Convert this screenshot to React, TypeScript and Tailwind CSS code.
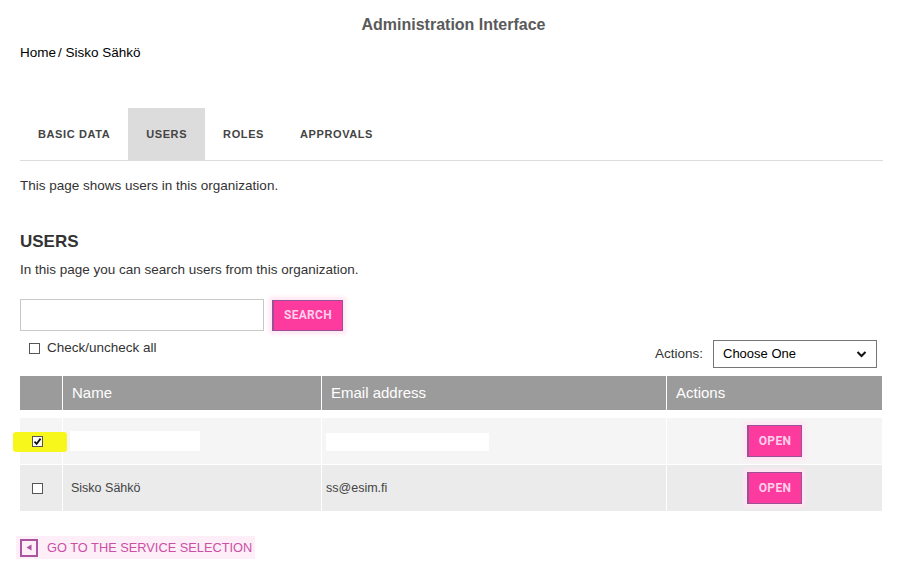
import React from 'react'

const tabs = ['BASIC DATA', 'USERS', 'ROLES', 'APPROVALS']

function Box({ checked }: { checked?: boolean }) {
  return (
    <span className="relative flex h-[11px] w-[11px] items-center justify-center border border-[#555] bg-white">
      {checked && (
        <svg width="9" height="9" viewBox="0 0 9 9" className="absolute">
          <path d="M1.5 4.6 L3.6 6.8 L7.6 1.6" fill="none" stroke="#111" strokeWidth="1.8" />
        </svg>
      )}
    </span>
  )
}

function PinkButton({ label, className }: { label: string; className?: string }) {
  return (
    <button
      className={
        'flex items-center justify-center border border-[#9a5296] border-l-2 bg-[#fd3a9d] font-["Roboto",sans-serif] text-[12px] font-bold tracking-[0.3px] text-[#ffd0ea] shadow-[0_0_4px_3px_#ffe6f3] ' +
        (className ?? '')
      }
    >
      {label}
    </button>
  )
}

export default function App() {
  return (
    <div className="min-h-[574px] w-[900px] bg-white font-['Liberation_Sans',Arial,sans-serif] text-[#333]">
      <div className="pt-[15px] pl-[7px] text-center text-[16px] leading-[20px] font-bold text-[#5a5a5a]">
        Administration Interface
      </div>

      <div className="px-[20px]">
        <div className="mt-[10px] text-[13.5px] leading-[16px] text-black">
          Home<span className="ml-[2px]">/ Sisko Sähkö</span>
        </div>

        <div className="mt-[47px] flex h-[53px] w-[863px] border-b border-[#dcdcdc]">
          {tabs.map((t) => (
            <div
              key={t}
              className={
                'flex items-center px-[18px] text-[11px] font-bold tracking-[0.6px] text-[#444] ' +
                (t === 'USERS' ? 'bg-[#dcdcdc] text-[#222]' : '')
              }
            >
              {t}
            </div>
          ))}
        </div>

        <p className="mt-[17px] text-[13.5px] leading-[16px]">This page shows users in this organization.</p>

        <h2 className="mt-[38px] text-[17px] leading-[20px] font-bold text-[#333]">USERS</h2>
        <p className="mt-[10px] text-[13.5px] leading-[16px]">In this page you can search users from this organization.</p>

        <div className="mt-[21px] flex items-center gap-[8px]">
          <input className="h-[32px] w-[244px] border border-[#c8c8c8] bg-white px-2 text-[13px] outline-none" />
          <PinkButton label="SEARCH" className="h-[31px] w-[71px]" />
        </div>

        <div className="mt-[9px] flex w-[857px] items-start justify-between">
          <label className="ml-[9px] flex items-center gap-[7px] text-[13.5px] leading-[16px]">
            <Box />
            Check/uncheck all
          </label>
          <div className="flex items-center gap-[10px]">
            <span className="text-[13.5px] text-[#333]">Actions:</span>
            <div className="flex h-[28px] w-[164px] items-center justify-between border border-[#767676] bg-white pr-[9px] pl-[9px] text-[13px] text-black">
              Choose One
              <svg width="11" height="8" viewBox="0 0 11 8">
                <path d="M1.5 2 L5.5 6 L9.5 2" fill="none" stroke="#111" strokeWidth="2" />
              </svg>
            </div>
          </div>
        </div>

        <div className="mt-[8px] w-[862px]">
          <div className="grid h-[34px] grid-cols-[42px_258px_344px_215px] gap-x-px bg-white text-[15px] text-white">
            <div className="bg-[#9b9b9b]" />
            <div className="flex items-center bg-[#9b9b9b] pl-[9px]">Name</div>
            <div className="flex items-center bg-[#9b9b9b] pl-[9px]">Email address</div>
            <div className="flex items-center bg-[#9b9b9b] pl-[9px]">Actions</div>
          </div>

          <div className="mt-[8px] grid h-[46px] grid-cols-[42px_258px_344px_215px] gap-x-px bg-white text-[12.5px] text-[#444]">
            <div className="relative flex items-center bg-[#f5f5f5] pl-[12px]">
              <span className="absolute top-[14px] left-[-7px] h-[20px] w-[54px] rounded-[3px] bg-[#f7f71c] blur-[0.5px]" />
              <span className="relative">
                <Box checked />
              </span>
            </div>
            <div className="flex items-center bg-[#f5f5f5] pl-[7px]">
              <span className="h-[20px] w-[130px] bg-white" />
            </div>
            <div className="flex items-center bg-[#f5f5f5] pl-[4px]">
              <span className="mt-[1px] h-[18px] w-[163px] bg-white" />
            </div>
            <div className="flex items-center justify-center bg-[#f5f5f5]">
              <PinkButton label="OPEN" className="h-[32px] w-[55px]" />
            </div>
          </div>

          <div className="mt-px grid h-[46px] grid-cols-[42px_258px_344px_215px] gap-x-px bg-white text-[12.5px] text-[#444]">
            <div className="flex items-center bg-[#ebebeb] pl-[12px]">
              <Box />
            </div>
            <div className="flex items-center bg-[#ebebeb] pl-[8px]">Sisko Sähkö</div>
            <div className="flex items-center bg-[#ebebeb] pl-[4px]">ss@esim.fi</div>
            <div className="flex items-center justify-center bg-[#ebebeb]">
              <PinkButton label="OPEN" className="h-[32px] w-[55px]" />
            </div>
          </div>
        </div>

        <a className="mt-[25px] ml-[-4px] flex w-[239px] items-center gap-[9px] bg-[#fdeef7] py-[2px] pl-[4px] text-[12.8px] text-[#cc4fa6]">
          <span className="flex h-[18px] w-[18px] items-center justify-center border-2 border-[#a9559f]">
            <svg width="6" height="7" viewBox="0 0 6 7">
              <path d="M5.5 0.5 L0.5 3.5 L5.5 6.5 Z" fill="#a9559f" />
            </svg>
          </span>
          GO TO THE SERVICE SELECTION
        </a>
      </div>
    </div>
  )
}
